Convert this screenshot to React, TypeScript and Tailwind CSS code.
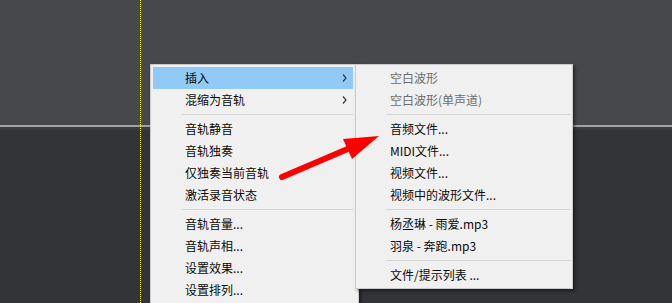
import React from 'react';

type Item = { label?: string; sep?: boolean; sub?: boolean; active?: boolean; disabled?: boolean };

const mainItems: Item[] = [
  { label: '插入', sub: true, active: true },
  { label: '混缩为音轨', sub: true },
  { sep: true },
  { label: '音轨静音' },
  { label: '音轨独奏' },
  { label: '仅独奏当前音轨' },
  { label: '激活录音状态' },
  { sep: true },
  { label: '音轨音量...' },
  { label: '音轨声相...' },
  { label: '设置效果...' },
  { label: '设置排列...' },
];

const subItems: Item[] = [
  { label: '空白波形', disabled: true },
  { label: '空白波形(单声道)', disabled: true },
  { sep: true },
  { label: '音频文件...' },
  { label: 'MIDI文件...' },
  { label: '视频文件...' },
  { label: '视频中的波形文件...' },
  { sep: true },
  { label: '杨丞琳 - 雨爱.mp3' },
  { label: '羽泉 - 奔跑.mp3' },
  { sep: true },
  { label: '文件/提示列表 ...' },
];

const Chevron = () => (
  <svg width="5" height="8" viewBox="0 0 5 8" className="absolute right-[6px] top-[7px]">
    <polyline points="1,0.5 4,4 1,7.5" fill="none" stroke="#3a3a3a" strokeWidth="1.2" />
  </svg>
);

const MenuRows: React.FC<{ items: Item[] }> = ({ items }) => (
  <>
    {items.map((it, i) =>
      it.sep ? (
        <div key={i} className="h-[7px] flex items-center pl-[28px]">
          <div className="h-px w-full bg-[#d4d4d4]" />
        </div>
      ) : (
        <div
          key={i}
          className={`relative h-[22px] flex items-center pl-[32px] whitespace-nowrap ${it.active ? 'bg-[#91c9f7]' : ''} ${it.disabled ? 'text-[#6d6d6d]' : 'text-[#0a0a0a]'}`}
        >
          {it.label}
          {it.sub && <Chevron />}
        </div>
      )
    )}
  </>
);

export default function App() {
  return (
    <div
      className="relative w-[672px] h-[303px] overflow-hidden text-[12px] leading-none"
      style={{ fontFamily: '"Noto Sans CJK SC", "Noto Sans", sans-serif' }}
    >
      <div className="flex flex-col h-full">
        <div className="h-[125px] bg-[#47484c]" />
        <div className="h-[2px] bg-[#a3a3a5]" />
        <div className="h-[3px] bg-[#3b3c40]" />
        <div className="flex-1 bg-[#333438]" />
      </div>

      {/* dotted playhead */}
      <div className="absolute left-[140px] top-0 h-full w-px bg-[repeating-linear-gradient(to_bottom,#ffff00_0px,#ffff00_1px,transparent_1px,transparent_2px)]" />

      {/* main context menu */}
      <div className="absolute left-[150px] top-[64px] w-[209px] h-[260px] bg-[#f0f0f0] border border-[#cbcbcb] pl-[2px] pr-[5px] pt-[2px] shadow-[2px_2px_3px_rgba(0,0,0,0.45)]">
        <MenuRows items={mainItems} />
      </div>

      {/* submenu */}
      <div className="absolute left-[355px] top-[64px] w-[218px] bg-[#f0f0f0] border border-[#cbcbcb] p-[2px] pr-[1px] shadow-[2px_2px_3px_rgba(0,0,0,0.45)]">
        <MenuRows items={subItems} />
      </div>

      {/* red annotation arrow */}
      <svg className="absolute left-0 top-0" width="672" height="303" viewBox="0 0 672 303">
        <line x1="282" y1="177" x2="350" y2="148" stroke="#ff0000" strokeWidth="6" strokeLinecap="round" />
        <polygon points="343,139 379,136 352,159" fill="#ff0000" />
      </svg>
    </div>
  );
}
